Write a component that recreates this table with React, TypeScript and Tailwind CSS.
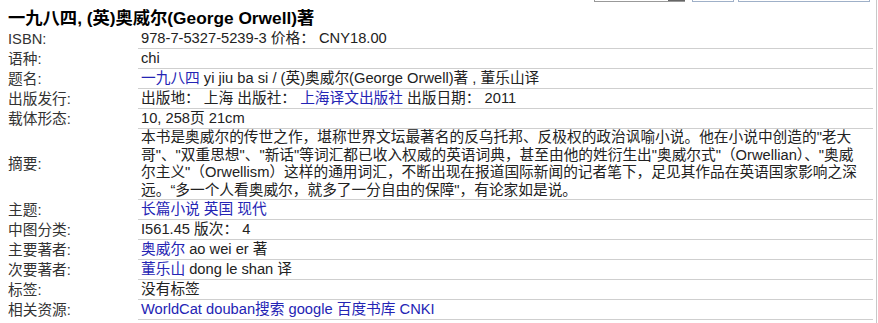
import type { ReactNode } from 'react'

const A = ({ children }: { children: ReactNode }) => (
	<a href="#" className="text-[#2424b4]">
		{children}
	</a>
)

type Row = { label: string; value: ReactNode; tall?: boolean }

const abstractLines = [
	'本书是奥威尔的传世之作，堪称世界文坛最著名的反乌托邦、反极权的政治讽喻小说。他在小说中创造的"老大',
	'哥"、"双重思想"、"新话"等词汇都已收入权威的英语词典，甚至由他的姓衍生出"奥威尔式"（Orwellian）、"奥威',
	'尔主义"（Orwellism）这样的通用词汇，不断出现在报道国际新闻的记者笔下，足见其作品在英语国家影响之深',
	'远。“多一个人看奥威尔，就多了一分自由的保障"，有论家如是说。'
]

const rows: Row[] = [
	{ label: 'ISBN:', value: '978-7-5327-5239-3 价格： CNY18.00' },
	{ label: '语种:', value: 'chi' },
	{
		label: '题名:',
		value: (
			<>
				<A>一九八四</A> yi jiu ba si / (英)奥威尔(George Orwell)著 , 董乐山译
			</>
		)
	},
	{
		label: '出版发行:',
		value: (
			<>
				出版地： 上海 出版社： <A>上海译文出版社</A> 出版日期： 2011
			</>
		)
	},
	{ label: '载体形态:', value: '10, 258页 21cm' },
	{
		label: '摘要:',
		tall: true,
		value: (
			<div className="leading-[17.5px]">
				{abstractLines.map((l) => (
					<div key={l} className="whitespace-nowrap">
						{l}
					</div>
				))}
			</div>
		)
	},
	{
		label: '主题:',
		value: (
			<>
				<A>长篇小说</A> <A>英国</A> <A>现代</A>
			</>
		)
	},
	{ label: '中图分类:', value: 'I561.45 版次： 4' },
	{
		label: '主要著者:',
		value: (
			<>
				<A>奥威尔</A> ao wei er 著
			</>
		)
	},
	{
		label: '次要著者:',
		value: (
			<>
				<A>董乐山</A> dong le shan 译
			</>
		)
	},
	{ label: '标签:', value: '没有标签' },
	{
		label: '相关资源:',
		value: (
			<>
				<A>WorldCat</A> <A>douban搜索</A> <A>google</A> <A>百度书库</A>{' '}
				<A>CNKI</A>
			</>
		)
	}
]

export default function App() {
	return (
		<div
			className="w-[877px] h-[323px] bg-white border-r border-[#c8c8c8] overflow-hidden text-[#222]"
			style={{
				fontFamily: '"Liberation Sans", "Noto Sans CJK SC", sans-serif'
			}}
		>
			{/* bottom edge of the search bar above */}
			<div className="flex h-[2px]">
				<div className="ml-[594px] w-[91px] flex border-l border-b border-[#999]">
					<div className="ml-auto w-[17px] bg-[#666]" />
				</div>
				<div className="ml-[7px] w-[42px] border-x border-b border-[#9fb0c8]" />
				<div className="ml-[4px] w-[132px] border-x border-b border-[#9fb0c8]" />
			</div>

			<h1 className="h-[27px] pl-2 pt-[6px] text-[17.3px] leading-[20px] font-bold text-black">
				一九八四, (英)奥威尔(George Orwell)著
			</h1>

			<div className="text-[14.7px] leading-[19px]">
				{rows.map((r) => (
					<div
						key={r.label}
						className={`flex ${r.tall ? 'h-[71px]' : 'h-[20px]'}`}
					>
						<div className="w-[138px] pl-2 flex items-center text-[#333]">
							{r.label}
						</div>
						<div className="w-[735px] pl-[3px] border-b border-[#cfcfcf] flex items-center">
							<div className="whitespace-nowrap">{r.value}</div>
						</div>
					</div>
				))}
			</div>
		</div>
	)
}
